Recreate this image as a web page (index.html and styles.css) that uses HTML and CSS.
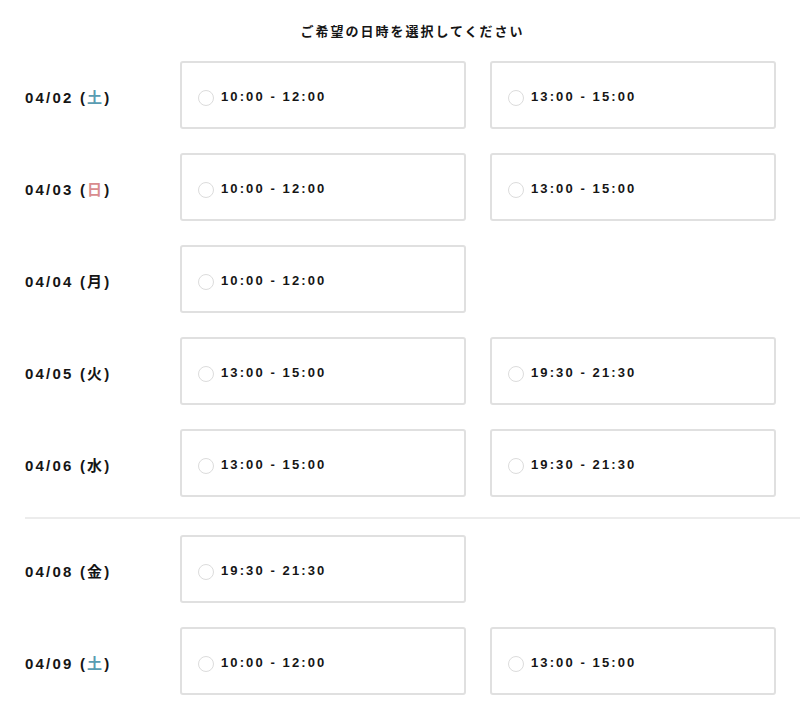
FILE: index.html
```html
<!DOCTYPE html>
<html lang="ja">
<head>
<meta charset="utf-8">
<title>ご希望の日時を選択してください</title>
<link rel="stylesheet" href="styles.css">
</head>
<body>
<div class="page">
  <h2 class="title">ご希望の日時を選択してください</h2>
  <div class="group">
    <div class="row">
      <div class="date">04/02 (<span class="sat">土</span>)</div>
      <div class="slots">
        <label class="slot"><span class="radio"></span><span class="time">10:00 - 12:00</span></label>
        <label class="slot"><span class="radio"></span><span class="time">13:00 - 15:00</span></label>
      </div>
    </div>
    <div class="row">
      <div class="date">04/03 (<span class="sun">日</span>)</div>
      <div class="slots">
        <label class="slot"><span class="radio"></span><span class="time">10:00 - 12:00</span></label>
        <label class="slot"><span class="radio"></span><span class="time">13:00 - 15:00</span></label>
      </div>
    </div>
    <div class="row">
      <div class="date">04/04 (月)</div>
      <div class="slots">
        <label class="slot"><span class="radio"></span><span class="time">10:00 - 12:00</span></label>
      </div>
    </div>
    <div class="row">
      <div class="date">04/05 (火)</div>
      <div class="slots">
        <label class="slot"><span class="radio"></span><span class="time">13:00 - 15:00</span></label>
        <label class="slot"><span class="radio"></span><span class="time">19:30 - 21:30</span></label>
      </div>
    </div>
    <div class="row">
      <div class="date">04/06 (水)</div>
      <div class="slots">
        <label class="slot"><span class="radio"></span><span class="time">13:00 - 15:00</span></label>
        <label class="slot"><span class="radio"></span><span class="time">19:30 - 21:30</span></label>
      </div>
    </div>
  </div>
  <hr class="divider">
  <div class="group">
    <div class="row">
      <div class="date">04/08 (金)</div>
      <div class="slots">
        <label class="slot"><span class="radio"></span><span class="time">19:30 - 21:30</span></label>
      </div>
    </div>
    <div class="row">
      <div class="date">04/09 (<span class="sat">土</span>)</div>
      <div class="slots">
        <label class="slot"><span class="radio"></span><span class="time">10:00 - 12:00</span></label>
        <label class="slot"><span class="radio"></span><span class="time">13:00 - 15:00</span></label>
      </div>
    </div>
  </div>
</div>
</body>
</html>
```
FILE: styles.css
```css
html, body {
  margin: 0;
  padding: 0;
  background: #fff;
}
body {
  font-family: "Liberation Sans", "Noto Sans CJK JP", sans-serif;
  color: #151515;
}
.page {
  padding: 0 0 0 25px;
  height: 704px;
  overflow: hidden;
}
.title {
  margin: 0;
  padding: 24px 0 0;
  height: 61px;
  box-sizing: border-box;
  text-align: center;
  font-family: "Noto Sans CJK JP", sans-serif;
  font-size: 13px;
  line-height: 14px;
  font-weight: 700;
  letter-spacing: 2px;
}
.group {
  display: flex;
  flex-direction: column;
  gap: 24px;
}
.row {
  display: grid;
  grid-template-columns: 155px 1fr;
  align-items: center;
}
.date {
  font-size: 15px;
  font-weight: 700;
  letter-spacing: 2.2px;
  padding-top: 2px;
}
.date span {
  font-family: "Noto Sans CJK JP", sans-serif;
  font-weight: 700;
}
.sat { color: #5a9cb2; }
.sun { color: #d98c8e; }
.slot {
  display: flex;
  align-items: center;
  gap: 7px;
  height: 68px;
  box-sizing: border-box;
  border: 2px solid #e0e0e0;
  border-radius: 3px;
  padding: 3px 0 0 16px;
}
.slots {
  display: grid;
  grid-template-columns: 286px 286px;
  column-gap: 24px;
}
.radio {
  width: 14px;
  height: 14px;
  border: 1px solid #dcdcdc;
  border-radius: 50%;
  flex: none;
  margin-top: 2px;
}
.time {
  font-size: 13px;
  font-weight: 700;
  letter-spacing: 2.1px;
}
.divider {
  margin: 20px 0 16px;
  border: 0;
  border-top: 2px solid #ececec;
  height: 0;
}
```
